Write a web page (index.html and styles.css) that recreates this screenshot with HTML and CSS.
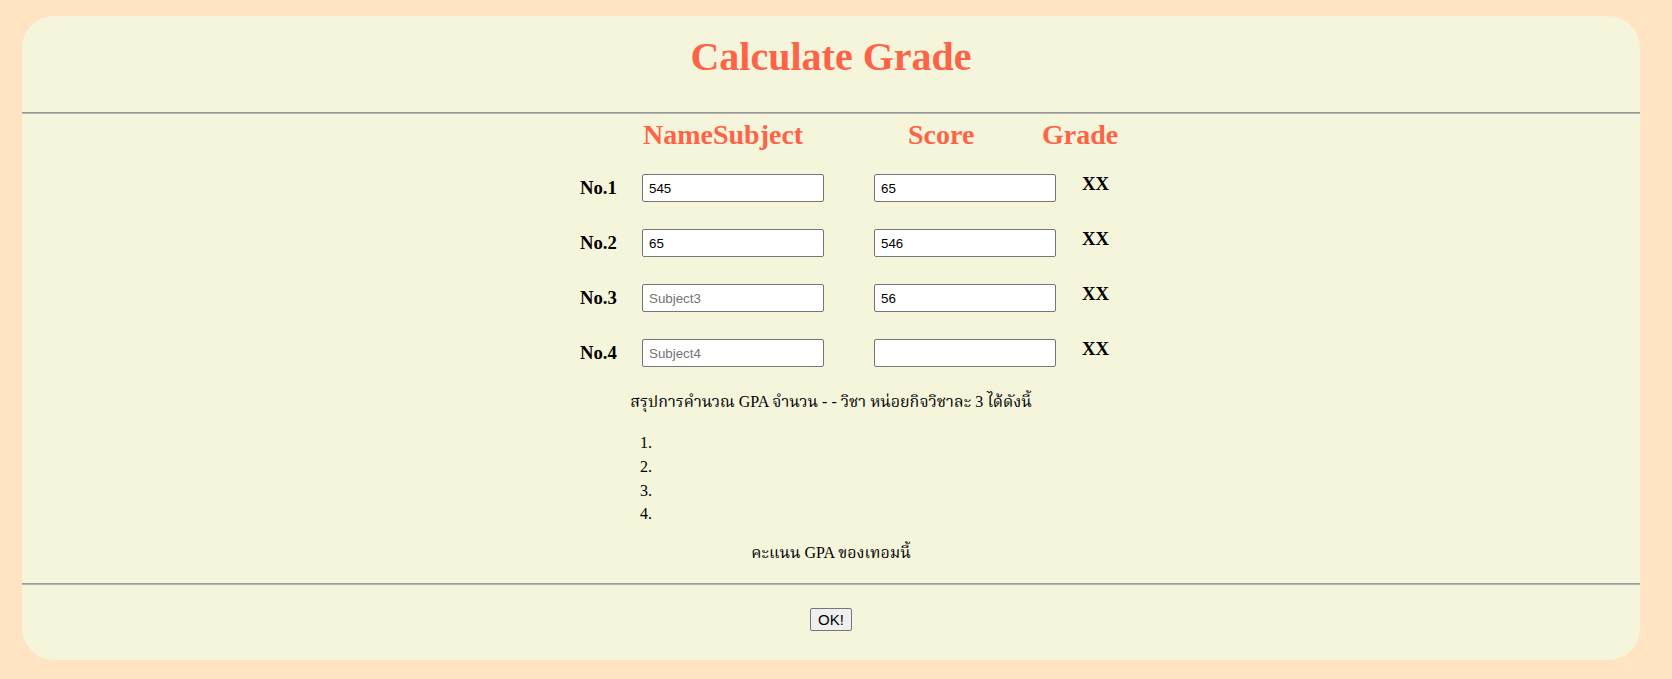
FILE: index.html
```html
<!DOCTYPE html>
<html lang="th">
<head>
<meta charset="utf-8">
<title>Calculate Grade</title>
<link rel="stylesheet" href="styles.css">
</head>
<body>
<main class="card">
  <header class="card-head">
    <h1 class="title">Calculate Grade</h1>
  </header>
  <hr class="rule">
  <section class="grades">
    <div class="head-row">
      <span class="col-name">NameSubject</span>
      <span class="col-score">Score</span>
      <span class="col-grade">Grade</span>
    </div>
    <div class="rows">
      <div class="row">
        <label class="no">No.1</label>
        <input class="field" type="text" value="545" placeholder="Subject1">
        <input class="field score" type="text" value="65">
        <span class="grade">XX</span>
      </div>
      <div class="row">
        <label class="no">No.2</label>
        <input class="field" type="text" value="65" placeholder="Subject2">
        <input class="field score" type="text" value="546">
        <span class="grade">XX</span>
      </div>
      <div class="row">
        <label class="no">No.3</label>
        <input class="field" type="text" placeholder="Subject3">
        <input class="field score" type="text" value="56">
        <span class="grade">XX</span>
      </div>
      <div class="row">
        <label class="no">No.4</label>
        <input class="field" type="text" placeholder="Subject4">
        <input class="field score" type="text">
        <span class="grade">XX</span>
      </div>
    </div>
  </section>
  <section class="summary">
    <p class="summary-text">สรุปการคำนวณ GPA จำนวน - - วิชา หน่อยกิจวิชาละ 3 ได้ดังนี้</p>
    <ol class="summary-list">
      <li></li>
      <li></li>
      <li></li>
      <li></li>
    </ol>
    <p class="gpa">คะแนน GPA ของเทอมนี้</p>
  </section>
  <hr class="rule">
  <footer class="actions">
    <button class="ok" type="button">OK!</button>
  </footer>
</main>
</body>
</html>
```

FILE: styles.css
```css
html, body {
  margin: 0;
  padding: 0;
}

body {
  background: #ffe4c4;
  font-family: "Liberation Serif", "Norasi", "Noto Serif Thai", "Loma", "Noto Sans", serif;
  color: #000;
}

.card {
  margin: 16px 32px 19px 22px;
  background: #f5f5dc;
  border-radius: 32px;
  display: flex;
  flex-direction: column;
}

.card-head {
  padding: 18px 0 32px;
  text-align: center;
}

.title {
  margin: 0;
  font-size: 40px;
  line-height: 46px;
  font-weight: bold;
  color: #ff6347;
}

.rule {
  margin: 0;
  height: 0;
  border: 0;
  border-top: 1px solid #999999;
  border-bottom: 1px solid #b4b4ae;
}

.grades {
  padding: 5px 0 0 558px;
}

.head-row {
  display: grid;
  grid-template-columns: 63px 265px 134px auto;
  font-size: 28px;
  line-height: 32px;
  font-weight: bold;
  color: #ff6347;
}

.col-name {
  grid-column: 2;
}

.rows {
  margin-top: 23px;
  display: flex;
  flex-direction: column;
  gap: 27px;
}

.row {
  display: flex;
  align-items: center;
  height: 28px;
}

.no {
  width: 62px;
  margin-top: -2px;
  font-size: 18.72px;
  line-height: 21px;
  font-weight: bold;
}

.field {
  box-sizing: border-box;
  width: 182px;
  height: 28px;
  margin: 0;
  padding: 0 6px;
  border: 1px solid #767676;
  border-radius: 2px;
  background: #fff;
  font-family: "Liberation Sans", Arial, sans-serif;
  font-size: 13.33px;
  color: #000;
}

.field::placeholder {
  color: #757575;
}

.score {
  margin-left: 50px;
}

.grade {
  align-self: flex-start;
  margin: -1px 0 0 26px;
  font-size: 18.72px;
  line-height: 21px;
  font-weight: bold;
}

.summary {
  font-size: 16px;
}

.summary-text {
  margin: 25px 0 0;
  line-height: 20px;
  text-align: center;
}

.summary-list {
  margin: 19px 0 0 594px;
  padding: 0 0 0 40px;
}

.summary-list li {
  height: 23.8px;
  line-height: 23.8px;
}

.gpa {
  margin: 17px 0 20px;
  line-height: 20px;
  text-align: center;
}

.actions {
  padding: 23px 0 29px;
  text-align: center;
}

.ok {
  box-sizing: border-box;
  height: 23px;
  margin: 0;
  padding: 1px 7px;
  font-family: "Liberation Sans", Arial, sans-serif;
  font-size: 15px;
  color: #000;
  background: #efefef;
  border: 1px solid #767676;
  border-radius: 2px;
}
```
